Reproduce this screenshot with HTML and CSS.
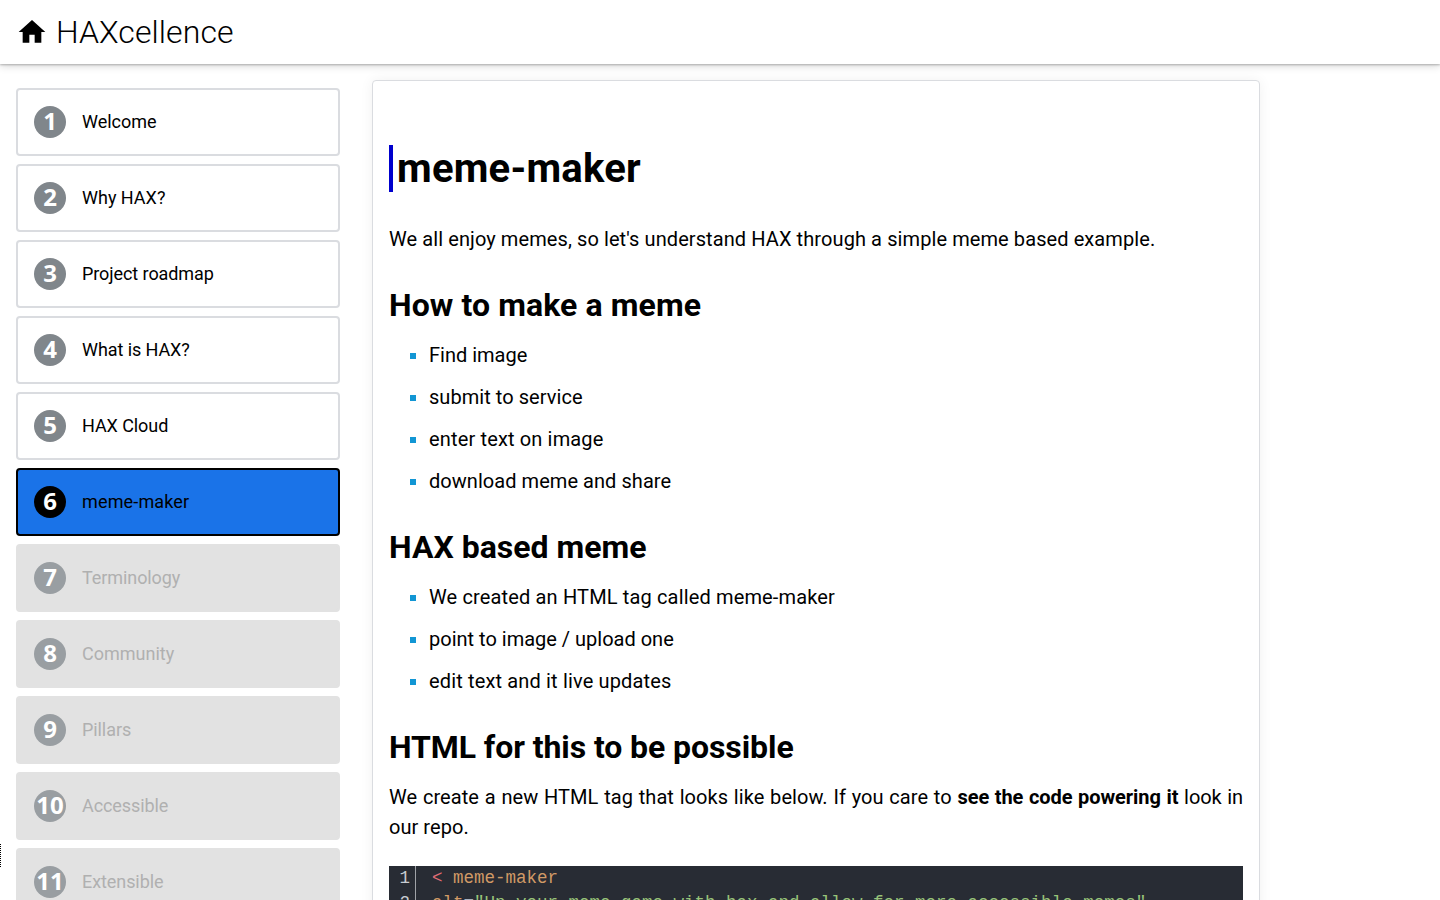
FILE: index.html
```
<!DOCTYPE html>
<html lang="en">
<head>
<meta charset="utf-8">
<title>HAXcellence</title>
<link rel="stylesheet" href="styles.css">
</head>
<body>
<header class="topbar">
  <svg class="home" viewBox="0 0 24 24"><path d="M10 20v-6h4v6h5v-8h3L12 3 2 12h3v8z"/></svg>
  <span class="site-title">HAXcellence</span>
</header>
<div class="layout">
  <nav class="steps">
    <a class="step"><span class="num">1</span><span class="label">Welcome</span></a>
    <a class="step"><span class="num">2</span><span class="label">Why HAX?</span></a>
    <a class="step"><span class="num">3</span><span class="label snug">Project roadmap</span></a>
    <a class="step"><span class="num">4</span><span class="label snug">What is HAX?</span></a>
    <a class="step"><span class="num">5</span><span class="label snug">HAX Cloud</span></a>
    <a class="step active"><span class="num">6</span><span class="label wider">meme-maker</span></a>
    <a class="step disabled"><span class="num">7</span><span class="label snug">Terminology</span></a>
    <a class="step disabled"><span class="num">8</span><span class="label">Community</span></a>
    <a class="step disabled"><span class="num">9</span><span class="label snug">Pillars</span></a>
    <a class="step disabled"><span class="num">10</span><span class="label snug">Accessible</span></a>
    <a class="step disabled"><span class="num">11</span><span class="label snug">Extensible</span></a>
  </nav>
  <main class="card">
    <h1>meme-maker</h1>
    <p class="wide">We all enjoy memes, so let's understand HAX through a simple meme based example.</p>
    <h2 class="wide">How to make a meme</h2>
    <ul>
      <li>Find image</li>
      <li class="slight">submit to service</li>
      <li class="wider">enter text on image</li>
      <li class="slight">download meme and share</li>
    </ul>
    <h2>HAX based meme</h2>
    <ul>
      <li class="wider">We created an HTML tag called meme-maker</li>
      <li>point to image / upload one</li>
      <li class="wider">edit text and it live updates</li>
    </ul>
    <h2 class="snug">HTML for this to be possible</h2>
    <p class="slight">We create a new HTML tag that looks like below. If you care to <b class="snug">see the code powering it</b> <span class="snug">look in</span> our repo.</p>
    <div class="code">
      <div class="gutter"><div>1</div><div>2</div></div>
      <div class="lines">
        <div><span class="tag">&lt;</span> <span class="attr">meme-maker</span></div>
        <div><span class="attr">alt</span><span class="op">=</span><span class="str">"Up your meme game with hax and allow for more accessible memes"</span></div>
      </div>
    </div>
  </main>
</div>
<div class="edge-handle"></div>
</body>
</html>
```
FILE: styles.css
```
* { box-sizing: border-box; }
html, body { height: 100%; }
body {
  margin: 0;
  overflow: hidden;
  background: #fff;
  color: #000;
  font-family: Roboto, sans-serif;
  display: flex;
  flex-direction: column;
}
.topbar {
  position: relative;
  z-index: 1;
  flex: none;
  height: 64px;
  padding: 0 16px;
  display: flex;
  align-items: center;
  gap: 8px;
  background: #fff;
  box-shadow: 0 1px 2px rgba(0,0,0,.25), 0 2px 8px rgba(0,0,0,.16);
}
.home { width: 32px; height: 32px; }
.site-title { font-size: 32px; font-weight: 300; line-height: 40px; letter-spacing: .08px; }
.layout {
  flex: 1;
  min-height: 0;
  overflow: hidden;
  display: flex;
  align-items: flex-start;
  padding: 16px 0 0 16px;
  gap: 32px;
}
.steps {
  width: 324px;
  padding-top: 8px;
  display: flex;
  flex-direction: column;
  gap: 8px;
}
.step {
  height: 68px;
  border: 2px solid #dadce0;
  border-radius: 4px;
  padding: 0 16px;
  display: flex;
  align-items: center;
  gap: 16px;
  font-size: 18px;
  background: #fff;
}
.label { line-height: 22px; }
.num {
  width: 32px;
  height: 32px;
  padding-bottom: 2px;
  border-radius: 50%;
  background: #80868b;
  color: #fff;
  display: flex;
  align-items: center;
  justify-content: center;
  font: 700 24px/30px "Noto Sans", sans-serif;
}
.active { background: #1a73e8; border-color: #000; }
.active .num { background: #000; }
.disabled { background: #e2e2e2; border-color: #e2e2e2; color: #b0b0b0; }
.disabled .num { background: #999ea2; }
.card {
  width: 888px;
  height: 1000px;
  padding: 64px 16px 0;
  border: 1px solid #dadce0;
  border-radius: 4px;
  background: #fff;
  box-shadow: 0 0 14px rgba(0,0,0,.06);
  font-size: 20px;
  line-height: 30px;
}
h1 {
  margin: 0 0 32px;
  padding-left: 4px;
  border-left: 4px solid #0000cd;
  font-size: 40px;
  line-height: 47px;
  font-weight: 700;
  letter-spacing: .24px;
}
p { margin: 0; text-align: justify; }
h2 { margin: 32px 0 16px; font-size: 32px; line-height: 38px; font-weight: 700; }
ul { margin: 0; padding: 0; list-style: none; }
li {
  display: flex;
  align-items: center;
  gap: 13px;
  padding-left: 21px;
  margin-bottom: 12px;
}
li::before { content: ""; width: 6px; height: 6px; margin-top: 2px; background: #1296d4; }
.slight { letter-spacing: .05px; }
.wide { letter-spacing: .09px; }
.wider { letter-spacing: .15px; }
.snug { letter-spacing: -.08px; }
.code {
  margin-top: 24px;
  display: flex;
  background: #282c34;
  color: #dcdfe4;
  font: 17.5px/24.5px "Liberation Mono", monospace;
  height: 140px;
}
.gutter { width: 27px; padding-right: 5px; border-right: 1px solid #a0a3a8; text-align: right; color: #c8ccd2; }
.lines { padding-left: 16px; }
.lines div { white-space: pre; }
.tag { color: #e06c75; }
.attr { color: #d19a66; }
.op { color: #abb2bf; }
.str { color: #98c379; }
.edge-handle {
  position: absolute;
  left: 0;
  top: 844px;
  width: 1px;
  height: 24px;
  background: repeating-linear-gradient(#000 0 1px, #fff 1px 2px);
}
```
